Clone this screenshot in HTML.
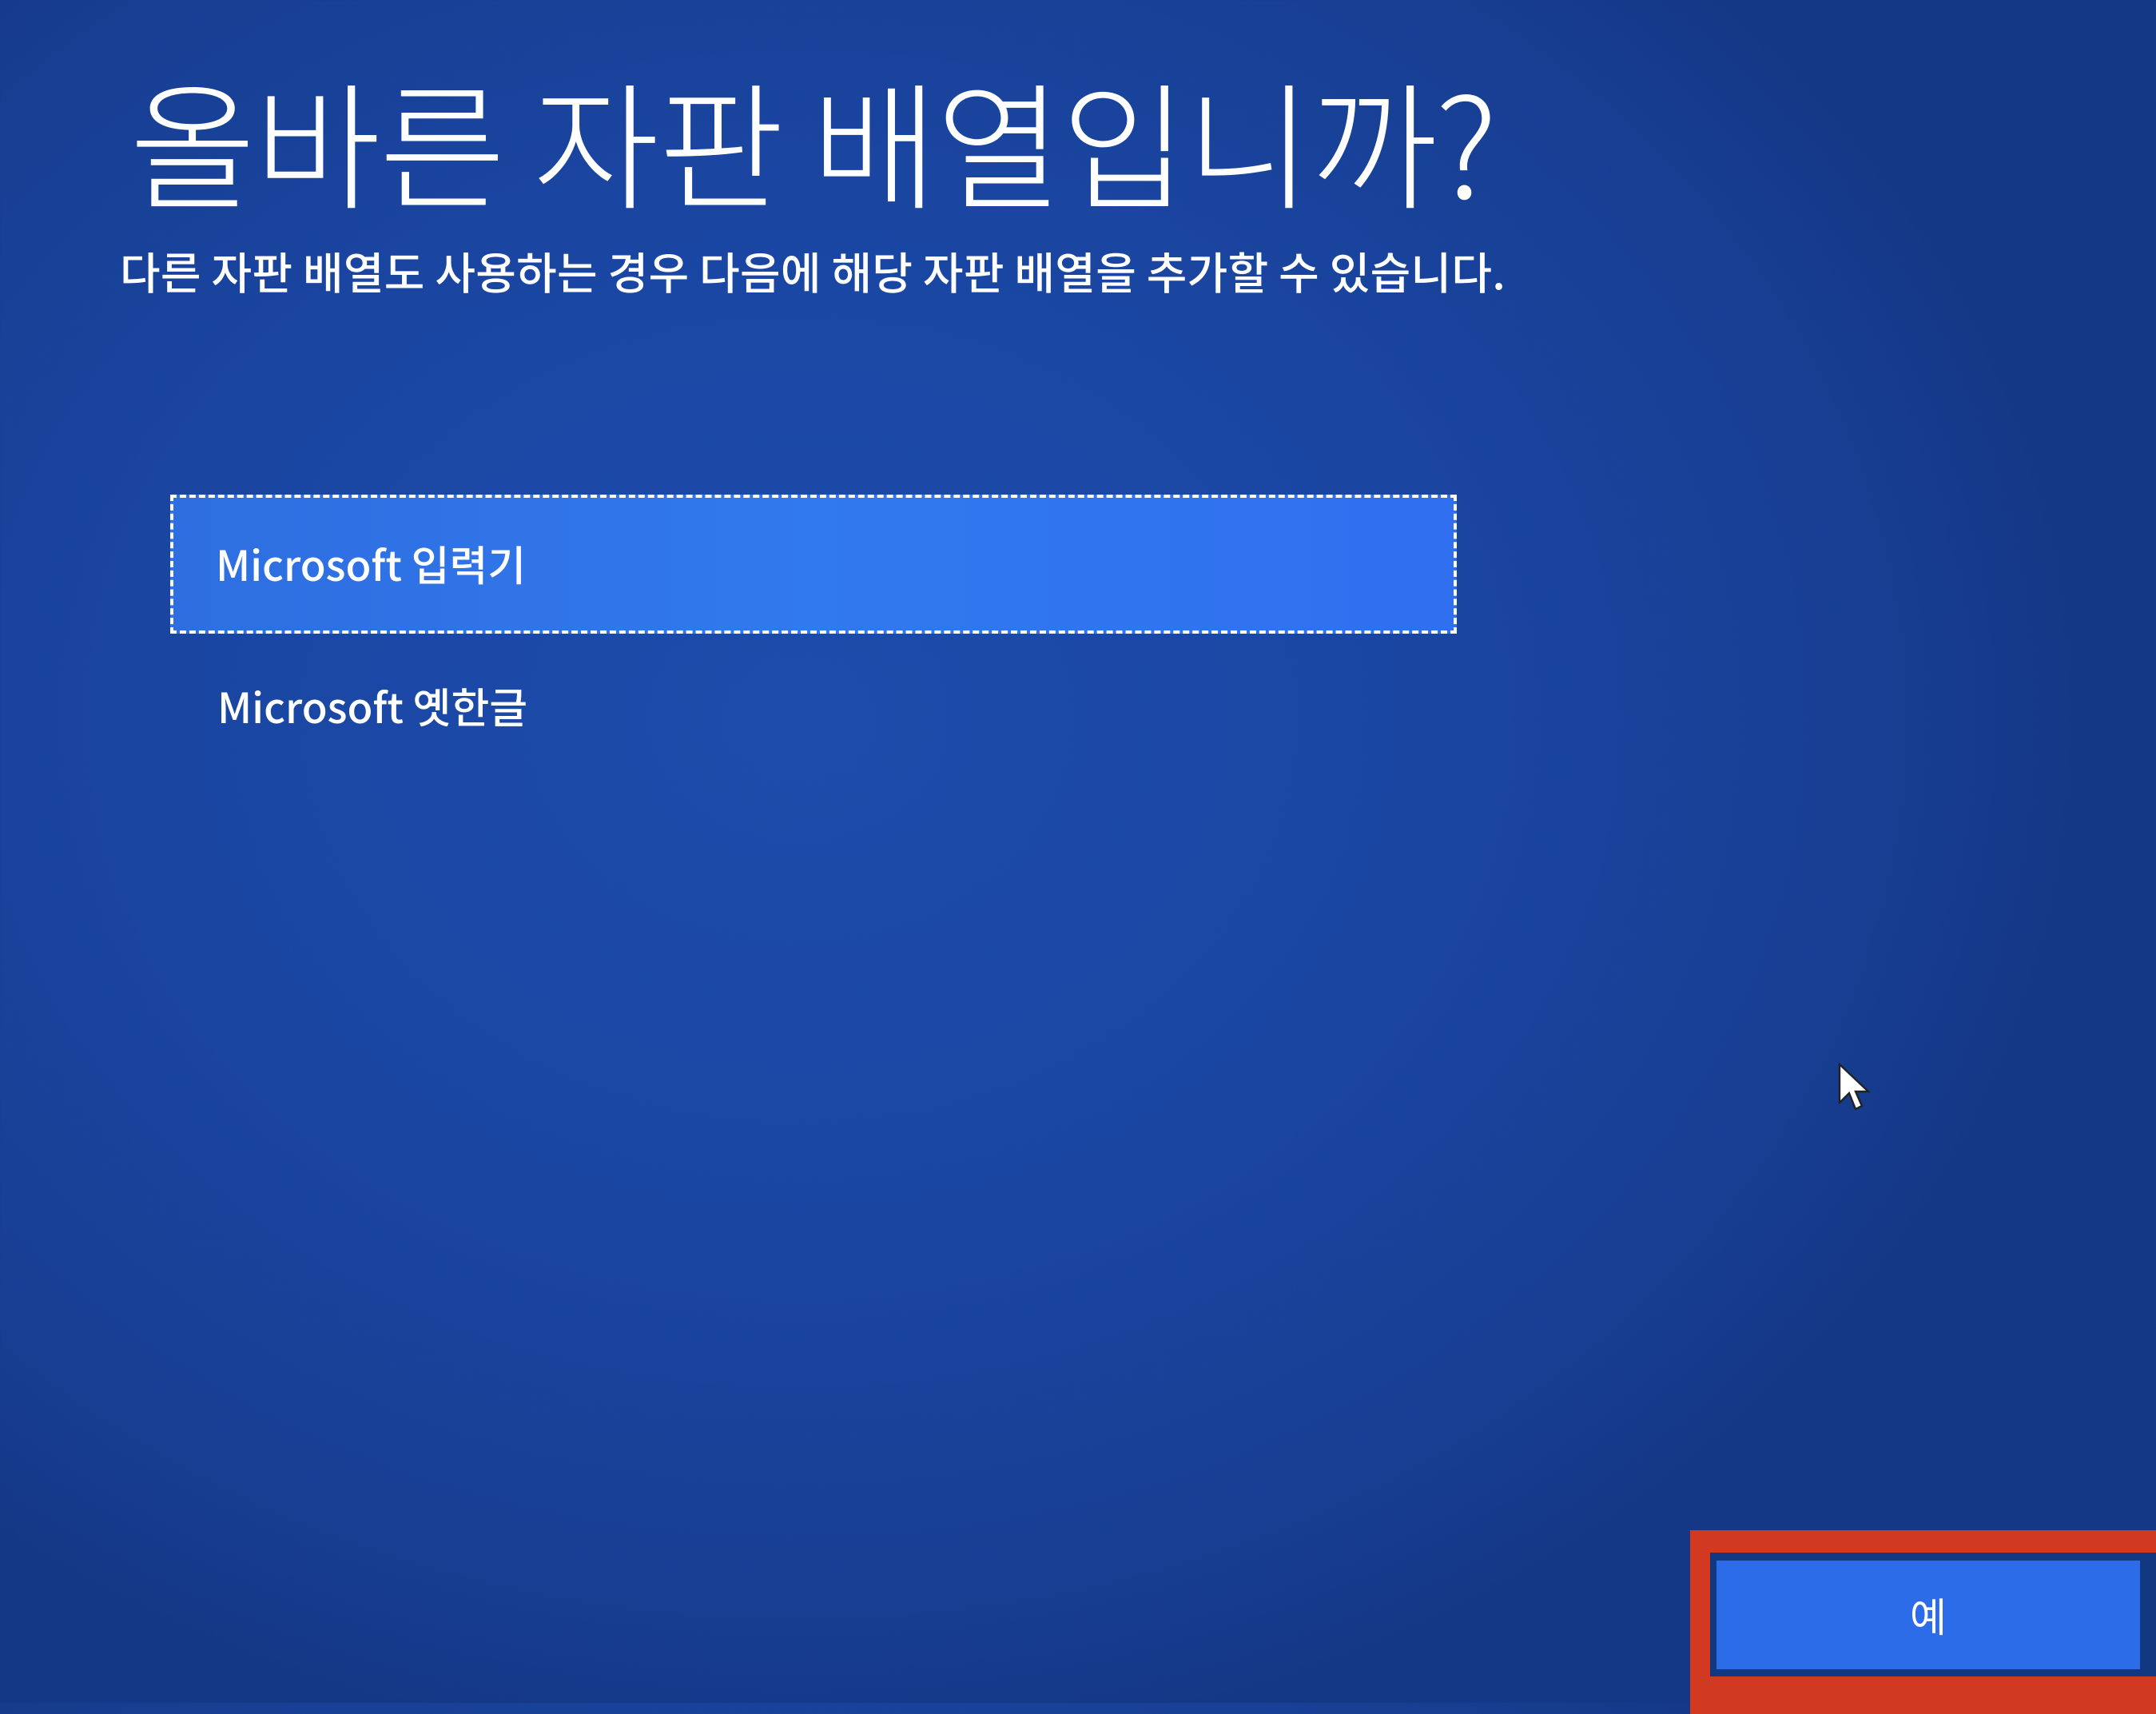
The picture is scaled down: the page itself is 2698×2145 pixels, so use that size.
<!DOCTYPE html>
<html><head><meta charset="utf-8"><style>
html,body{margin:0;padding:0}
body{width:2698px;height:2131px;overflow:hidden;position:relative;
background:radial-gradient(ellipse 1600px 1300px at 1000px 900px,#1d4cac 0%,#1a46a2 50%,#173e92 85%,#153886 100%);
font-family:"Liberation Sans","Noto Sans CJK KR",sans-serif;color:#fff}
.t{position:absolute;white-space:nowrap}
#title{left:162px;top:48px;font-size:172px;font-weight:300;letter-spacing:-2px;font-family:"Noto Sans CJK KR",sans-serif}
#sub{left:150px;top:298px;font-size:55px;font-weight:500;letter-spacing:0.3px;font-family:"Noto Sans CJK KR",sans-serif}
#sel{position:absolute;left:213px;top:619px;width:1610px;height:174px;background:linear-gradient(90deg,#2e6ee0,#3179ee 50%,#2f6ff0);border:4px dashed #fff;box-sizing:border-box}
.item{font-size:52px;font-family:"Noto Sans CJK KR",sans-serif;font-weight:500}
#red{position:absolute;left:2115px;top:1915px;width:600px;height:230px;background:#d13a20}
#inner{position:absolute;left:2140px;top:1943px;width:600px;height:155px;background:#123882}
#btn{position:absolute;left:2148px;top:1953px;width:530px;height:136px;background:#2c6ce8;color:#fff;font-size:50px;text-align:center;line-height:136px;font-family:"Noto Sans CJK KR",sans-serif}
</style></head><body>
<div class="t" id="title">올바른 자판 배열입니까?</div>
<div class="t" id="sub">다른 자판 배열도 사용하는 경우 다음에 해당 자판 배열을 추가할 수 있습니다.</div>
<div id="sel"></div>
<div class="t item" style="left:270px;top:667px">Microsoft 입력기</div>
<div class="t item" style="left:272px;top:845px">Microsoft 옛한글</div>
<svg style="position:absolute;left:2300px;top:1330px" width="44" height="66" viewBox="0 0 22 33"><path d="M1 1 L1 25 L7 19 L11 29 L15 27 L11 18 L19 18 Z" fill="#fff" stroke="#222" stroke-width="1.2"/></svg>
<div id="red"></div>
<div id="inner"></div>
<div id="btn">예</div>
</body></html>
